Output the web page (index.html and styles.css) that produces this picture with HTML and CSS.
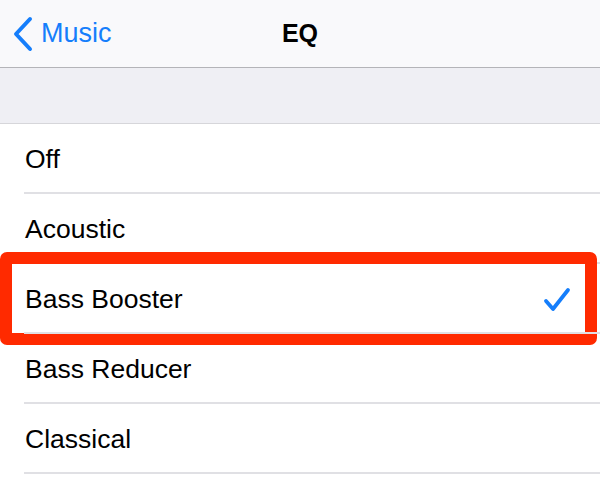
FILE: index.html
```html
<!DOCTYPE html>
<html lang="en">

<head>
    <meta charset="UTF-8">
    <meta name="viewport" content="width=device-width, initial-scale=1.0">
    <title>EQ</title>
    <link rel="stylesheet" href="styles.css">
</head>

<body>

    <div class="navbar">
        <a class="back" href="#">
            <svg class="chevron" width="22" height="36" viewBox="0 0 22 36">
                <path d="M18 3 L4 18 L18 33" fill="none" stroke="#157efb" stroke-width="4" stroke-linecap="round" stroke-linejoin="round" />
            </svg>
            <span>Music</span>
        </a>
        <h1 class="title">EQ</h1>
        <div class="spacer"></div>
    </div>

    <div class="group-gap"></div>

    <ul class="list">
        <li class="row">Off</li>
        <li class="row">Acoustic</li>
        <li class="row selected">
            Bass Booster
            <svg class="check" width="28" height="26" viewBox="0 0 28 26">
                <path d="M3 14 L10 22 L25 3" fill="none" stroke="#157efb" stroke-width="3.8" stroke-linecap="round" stroke-linejoin="round" />
            </svg>
            <!-- 标注框 -->
            <div class="highlight"></div>
        </li>
        <li class="row">Bass Reducer</li>
        <li class="row">Classical</li>
    </ul>

</body>

</html>
```

FILE: styles.css
```css
* {
    margin: 0px;
    padding: 0px;
    box-sizing: border-box;
}

ul,
ol {
    list-style: none
}

body {
    width: 600px;
    background-color: #fff;
    font-family: "Liberation Sans", Arial, sans-serif;
    color: #000;
    overflow: hidden;
}

.navbar {
    height: 68px;
    background-color: #f9f9fb;
    border-bottom: 1px solid #b4b4b8;

    display: flex;
    align-items: center;
    padding: 0 12px 0 12px;
}

.navbar .back {
    flex: 1;
    display: flex;
    align-items: center;
    text-decoration: none;
    color: #157efb;
    font-size: 27px;
}

.navbar .back .chevron {
    margin-right: 7px;
    margin-top: 1px;
}

.navbar .title {
    font-size: 25px;
    font-weight: 700;
    text-align: center;
}

.navbar .spacer {
    flex: 1;
}

.group-gap {
    height: 56px;
    background-color: #efeff4;
    border-bottom: 1px solid #d6d6da;
}

.list .row {
    position: relative;
    height: 70px;
    padding: 0 24px 0 25px;

    display: flex;
    align-items: center;
    justify-content: space-between;

    font-size: 26.5px;
}

/* 左侧缩进的分隔线 */
.list .row::after {
    content: "";
    position: absolute;
    left: 24px;
    right: 0;
    bottom: 0;
    height: 2px;
    background-color: #e0e0e4;
}

.list .row .check {
    margin-right: 5px;
    margin-top: 1px;
}

.highlight {
    position: absolute;
    top: -12px;
    bottom: -11px;
    left: 0;
    right: 3px;
    border: 12px solid #ff2a00;
    border-radius: 7px;
}
```
